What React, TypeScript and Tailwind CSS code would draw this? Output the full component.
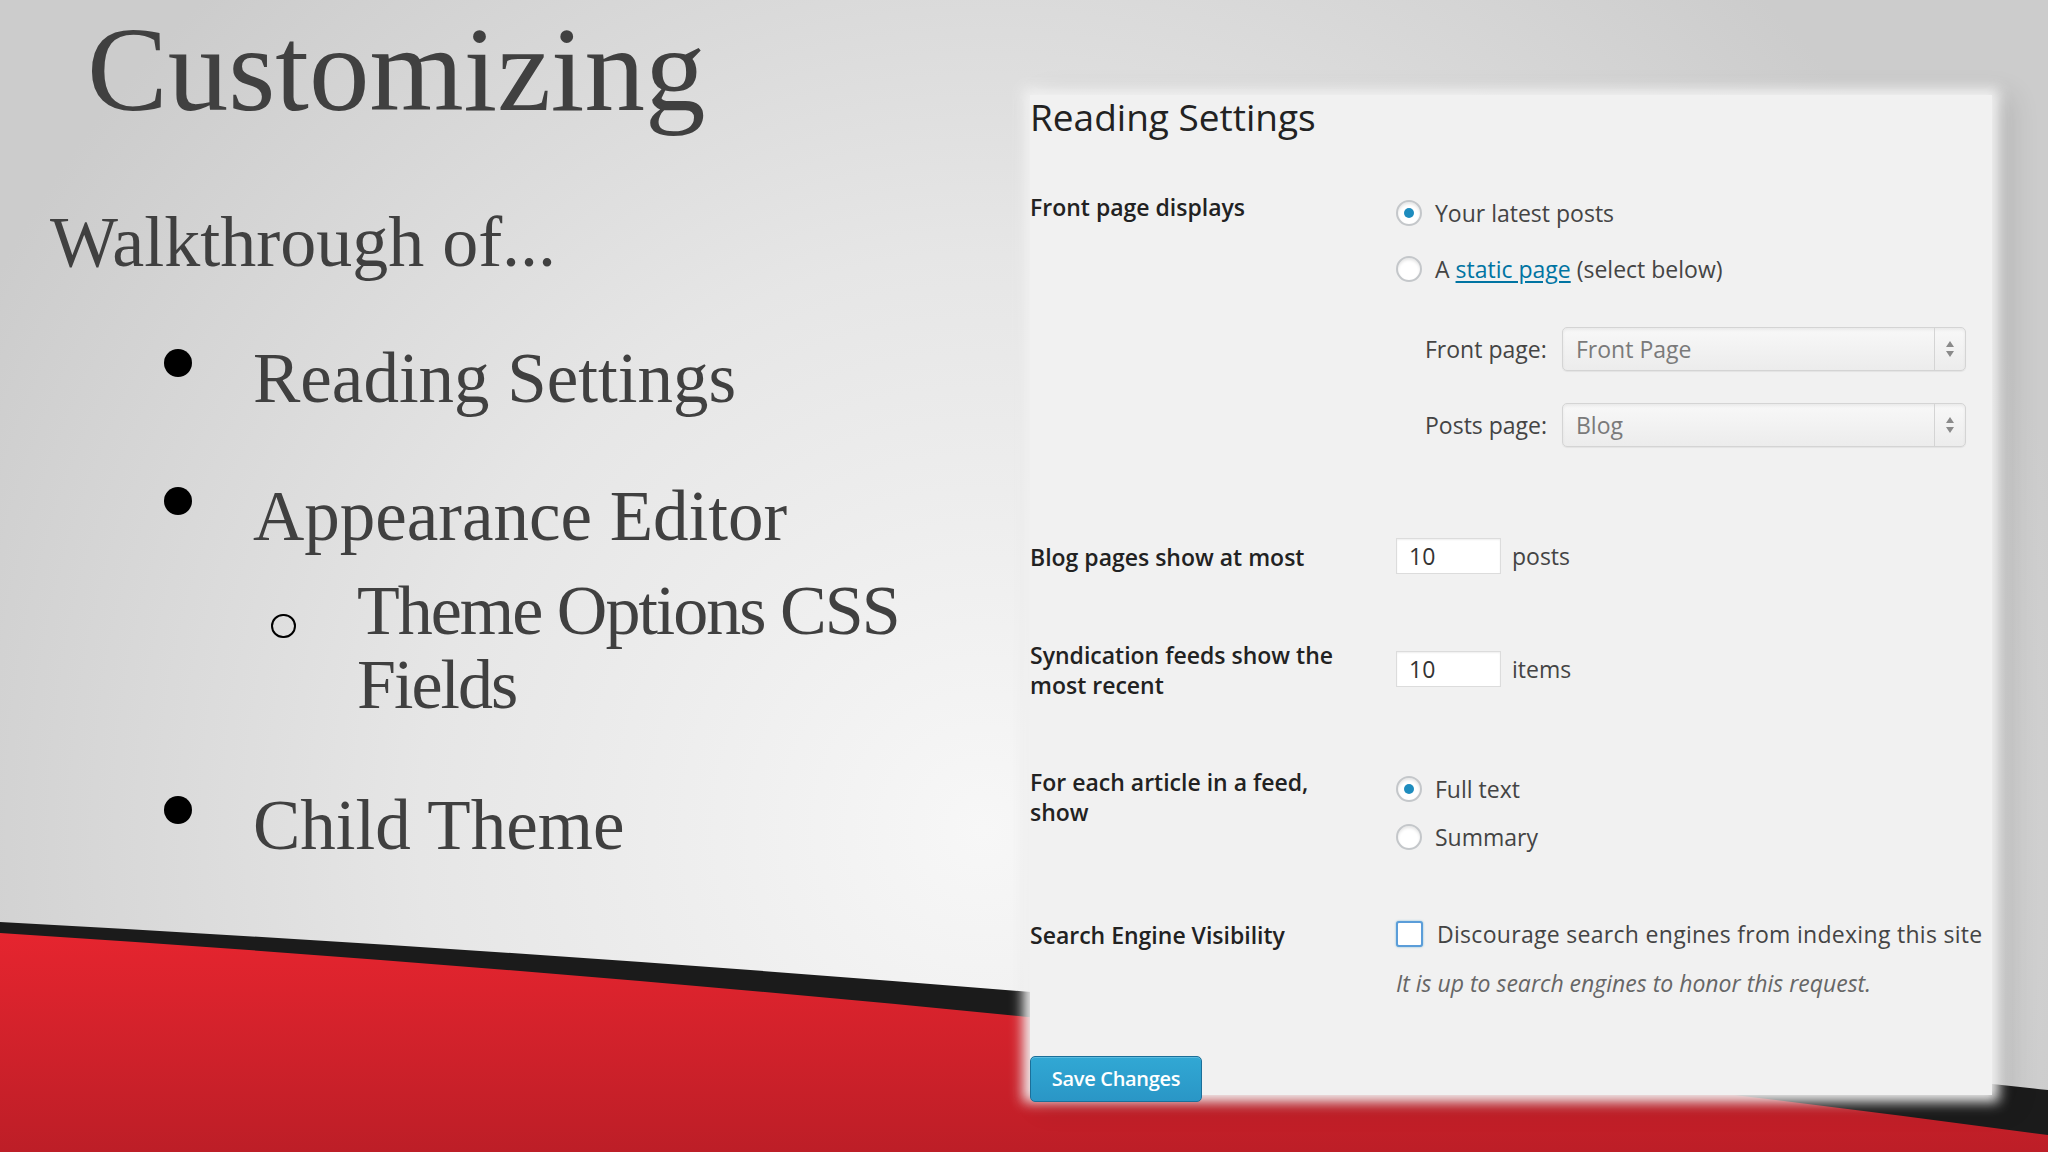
import React from "react";

function Radio({ checked }: { checked?: boolean }) {
  return (
    <span className="w-[26px] h-[26px] rounded-full border-2 border-[#c4c7ca] bg-white shadow-[inset_0_2px_3px_rgba(0,0,0,0.1)] flex items-center justify-center shrink-0">
      {checked && <span className="w-[10px] h-[10px] rounded-full bg-[#1e8cbe]" />}
    </span>
  );
}

function Select({ value }: { value: string }) {
  return (
    <div className="w-[404px] h-[44px] rounded-[5px] border border-[#d4d4d4] bg-gradient-to-b from-[#f8f8f8] to-[#ececec] shadow-[inset_0_2px_3px_rgba(0,0,0,0.06),0_1px_1px_rgba(0,0,0,0.06)] flex items-center">
      <span className="flex-1 pl-[13px] text-[#7a7a7a]">{value}</span>
      <span className="w-[31px] h-full border-l border-[#d4d4d4] flex items-center justify-center">
        <svg width="10" height="20" viewBox="0 0 10 20">
          <path d="M5 2 L9 8 H1 Z M5 18 L9 12 H1 Z" fill="#8a8a8a" />
        </svg>
      </span>
    </div>
  );
}

function NumberBox({ value }: { value: string }) {
  return (
    <span className="w-[105px] h-[36px] bg-white border border-[#dcdcdc] shadow-[inset_0_1px_2px_rgba(0,0,0,0.07)] flex items-center pl-[12px] text-[#333]">
      {value}
    </span>
  );
}

function Bullet({ children, sub }: { children: React.ReactNode; sub?: React.ReactNode }) {
  return (
    <li className="flex">
      <span className="ml-[164px] mt-[6px] w-[28px] h-[28px] rounded-full bg-black shrink-0" />
      <div className="ml-[61px]">
        <div className="text-[71px] leading-[70px] whitespace-nowrap">{children}</div>
        {sub}
      </div>
    </li>
  );
}

export default function App() {
  return (
    <div className="relative w-[2048px] h-[1152px] overflow-hidden bg-[radial-gradient(ellipse_55%_100%_at_48%_72%,#f7f7f7_0%,#e6e6e6_50%,#cccccc_100%)]">
      {/* slide swoosh */}
      <svg className="absolute inset-0" width="2048" height="1152" viewBox="0 0 2048 1152">
        <defs>
          <linearGradient id="red" x1="0" y1="930" x2="0" y2="1152" gradientUnits="userSpaceOnUse">
            <stop offset="0" stopColor="#e6252f" />
            <stop offset="1" stopColor="#bd1e27" />
          </linearGradient>
        </defs>
        <path d="M0 922 Q1024 977 2048 1090 L2048 1152 L0 1152 Z" fill="#1b1b1b" />
        <path d="M0 933 Q1024 999 2048 1135 L2048 1152 L0 1152 Z" fill="url(#red)" />
      </svg>

      <div className="relative flex">
        {/* left: slide text */}
        <div className="w-[1030px] shrink-0 text-[#404040] font-['Liberation_Serif','Times_New_Roman',serif]">
          <h1 className="pt-[9px] pl-[87px] text-[121px] leading-[120px]">Customizing</h1>
          <p className="mt-[78px] pl-[50px] text-[72px] leading-[70px]">Walkthrough of...</p>
          <ul className="mt-[66px] flex flex-col gap-[68px]">
            <Bullet>Reading Settings</Bullet>
            <Bullet
              sub={
                <div className="mt-[23px] flex">
                  <span className="ml-[18px] mt-[40px] w-[25px] h-[24px] rounded-full border-2 border-black shrink-0" />
                  <div className="ml-[61px] w-[600px] text-[70px] leading-[74px] tracking-[-2px]">Theme Options CSS Fields</div>
                </div>
              }
            >
              Appearance Editor
            </Bullet>
            <Bullet>Child Theme</Bullet>
          </ul>
        </div>

        {/* right: reading settings screenshot */}
        <div className="mt-[95px] w-[962px] h-[1000px] shrink-0 bg-[#f1f1f1] shadow-[0_0_12px_7px_#f1f1f1,14px_6px_26px_6px_rgba(0,0,0,0.12)] font-['Open_Sans',sans-serif] text-[23px] leading-[30px] text-[#444]">
          <h2 className="text-[37px] leading-[44px] text-[#222]">Reading Settings</h2>

          <div className="mt-[53px] flex">
            <div className="w-[366px] shrink-0 font-semibold text-[#222]">Front page displays</div>
            <div className="mt-[6px] flex flex-col">
              <label className="h-[30px] flex items-center gap-[13px]">
                <Radio checked />
                <span>Your latest posts</span>
              </label>
              <label className="mt-[26px] h-[30px] flex items-center gap-[13px]">
                <Radio />
                <span>
                  A <span className="text-[#0074a2] underline underline-offset-[3px]">static page</span> (select below)
                </span>
              </label>
              <div className="mt-[43px] flex items-center pl-[29px]">
                <span className="w-[137px] shrink-0">Front page:</span>
                <Select value="Front Page" />
              </div>
              <div className="mt-[32px] flex items-center pl-[29px]">
                <span className="w-[137px] shrink-0">Posts page:</span>
                <Select value="Blog" />
              </div>
            </div>
          </div>

          <div className="mt-[91px] flex">
            <div className="mt-[4px] w-[366px] shrink-0 font-semibold text-[#222]">Blog pages show at most</div>
            <div className="flex items-center gap-[11px]">
              <NumberBox value="10" />
              <span>posts</span>
            </div>
          </div>

          <div className="mt-[66px] flex">
            <div className="w-[366px] shrink-0">
              <div className="w-[330px] font-semibold text-[#222]">Syndication feeds show the most recent</div>
            </div>
            <div className="mt-[11px] flex items-center gap-[11px] self-start">
              <NumberBox value="10" />
              <span>items</span>
            </div>
          </div>

          <div className="mt-[67px] flex">
            <div className="w-[366px] shrink-0">
              <div className="w-[330px] font-semibold text-[#222]">For each article in a feed, show</div>
            </div>
            <div className="mt-[7px] flex flex-col">
              <label className="h-[30px] flex items-center gap-[13px]">
                <Radio checked />
                <span>Full text</span>
              </label>
              <label className="mt-[18px] h-[30px] flex items-center gap-[13px]">
                <Radio />
                <span>Summary</span>
              </label>
            </div>
          </div>

          <div className="mt-[67px] flex">
            <div className="mt-[1px] w-[366px] shrink-0 font-semibold text-[#222]">Search Engine Visibility</div>
            <div className="flex flex-col">
              <label className="h-[30px] flex items-center gap-[14px] whitespace-nowrap tracking-[0.3px]">
                <span className="w-[27px] h-[26px] rounded-[3px] border-2 border-[#5b9dd9] bg-white shadow-[0_0_2px_rgba(30,140,190,0.6)] shrink-0" />
                <span>Discourage search engines from indexing this site</span>
              </label>
              <p className="mt-[19px] italic text-[#666]">It is up to search engines to honor this request.</p>
            </div>
          </div>

          <button className="mt-[58px] w-[172px] h-[46px] rounded-[5px] bg-gradient-to-b from-[#31a8d4] to-[#2a96c6] border border-[#1c6f99] shadow-[inset_0_1px_0_rgba(120,200,230,0.6)] text-white text-[20px] font-semibold tracking-[-0.3px] leading-none">
            Save Changes
          </button>
        </div>
      </div>
    </div>
  );
}
